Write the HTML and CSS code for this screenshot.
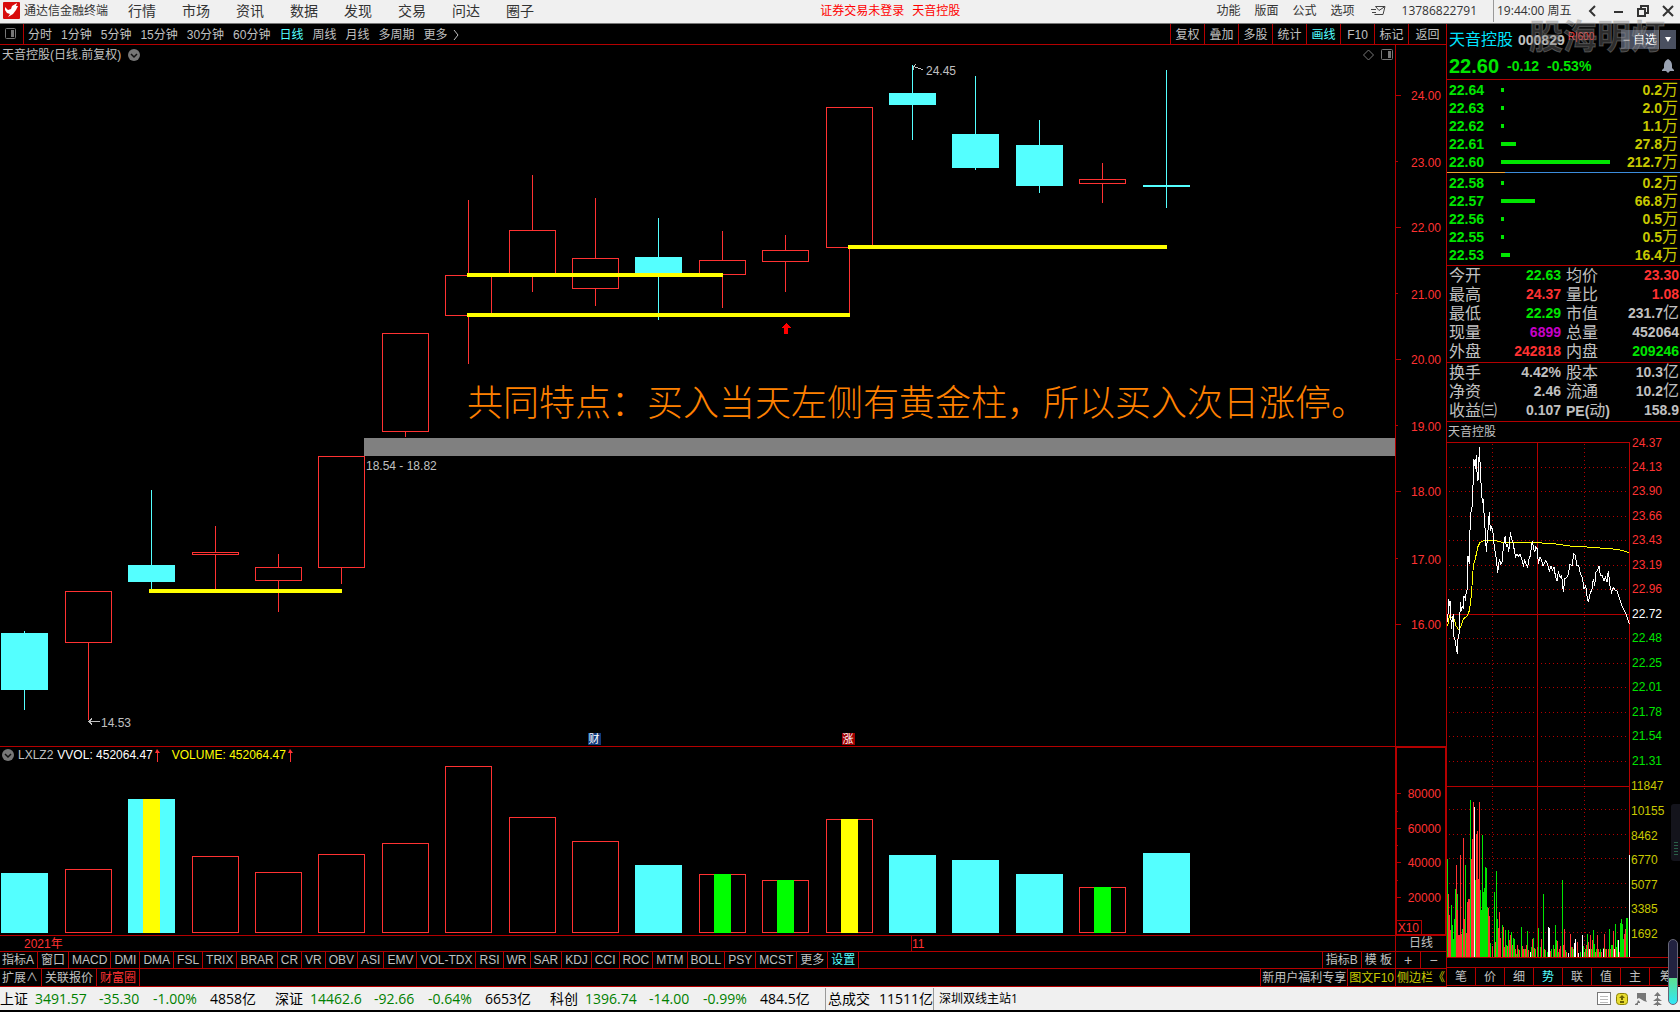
FILE: index.html
```html
<!DOCTYPE html>
<html lang="zh-CN">
<head>
<meta charset="utf-8">
<title>通达信金融终端</title>
<link rel="stylesheet" href="styles.css">
</head>
<body>
<header class="titlebar">
  <svg class="logo" viewBox="0 0 17 17" aria-hidden="true"><rect width="17" height="17" rx="1" fill="#d80c0c"/><path d="M2 5L5 8L8 7L9 4L14 1L13 4L15 4L13 8L10 12L5 15L7 12L4 11L2 8Z" fill="#fff"/></svg>
  <h1 class="app-name">通达信金融终端</h1>
  <nav class="menu">
    <button>行情</button><button>市场</button><button>资讯</button><button>数据</button><button>发现</button><button>交易</button><button>问达</button><button>圈子</button>
  </nav>
  <p class="login-state"><span>证券交易未登录</span><span>天音控股</span></p>
  <nav class="tools">
    <button>功能</button><button>版面</button><button>公式</button><button>选项</button>
  </nav>
  <svg class="mail" viewBox="0 0 15 11" aria-hidden="true"><path d="M4.500 1.500H14L12 9.500H3.500M4.500 1.500L8 5.500L14 1.500M0 4.500H5M1 7.500H5" fill="none" stroke="#444"/></svg>
  <span class="phone">13786822791</span>
  <time class="clock">19:44:00 周五</time>
  <div class="window-buttons">
    <button aria-label="收起"><svg viewBox="0 0 12 12"><path d="M8 1L3 6L8 11" /></svg></button>
    <button aria-label="最小化"><svg viewBox="0 0 12 12"><path d="M2 7H11"/></svg></button>
    <button aria-label="还原"><svg viewBox="0 0 12 12"><path d="M4 4V1H11V8H8M1 4H8V11H1Z"/></svg></button>
    <button aria-label="关闭"><svg viewBox="0 0 12 12"><path d="M1 1L11 11M11 1L1 11"/></svg></button>
  </div>
</header>

<main class="workspace">
  <section class="chart-area">
    <div class="toolbar">
      <button class="pane-toggle" aria-label="侧栏"><svg viewBox="0 0 13 12"><rect x="1.500" y=".5" width="10" height="10" rx="1" fill="none" stroke="#777"/><rect x="7" y="2" width="3" height="7" fill="#777"/></svg></button>
      <div class="periods">
        <button>分时</button><button>1分钟</button><button>5分钟</button><button>15分钟</button><button>30分钟</button><button>60分钟</button><button class="on">日线</button><button>周线</button><button>月线</button><button>多周期</button><button>更多<svg class="chev" viewBox="0 0 6 10"><path d="M1 0L5 5L1 10" fill="none" stroke="#c0c0c0"/></svg></button>
      </div>
      <div class="actions">
        <button>复权</button><button>叠加</button><button>多股</button><button>统计</button><button class="on">画线</button><button>F10</button><button>标记</button><button>返回</button>
      </div>
    </div>

    <div class="pane">
      <div class="plot">
        <div class="plot-title">
          <h2>天音控股(日线.前复权)</h2>
          <svg class="round" viewBox="0 0 12 12"><circle cx="6" cy="6" r="6" fill="#777"/><path d="M3 5L6 8L9 5" fill="none" stroke="#111" stroke-width="1.500"/></svg>
          <svg class="corner" viewBox="0 0 30 12"><path d="M5.500 1L10.500 6L5.500 11L.5 6Z" fill="none" stroke="#777"/><rect x="18.500" y=".5" width="11" height="10" rx="1" fill="none" stroke="#777"/><rect x="25" y="2" width="3" height="7" fill="#777"/></svg>
        </div>
        <svg class="graph" viewBox="0 63 1395 683" role="img" aria-label="日线K线图">
          <rect x="364" y="438" width="1031" height="18" fill="#808080"/>
          <g class="up">
            <path d="M88.500 643V720M215.500 526V552M215.500 555V589M278.500 554V567M278.500 581V612M341.500 568V584M405.500 432V437M468.500 200V275M468.500 316V364M532.500 175V230M532.500 276V292M595.500 198V258M595.500 289V306M722.500 231V260M722.500 275V308M785.500 235V250M785.500 262V292M849.500 248V316M1102.500 163V179M1102.500 184V203"/>
            <rect x="65.500" y="591.500" width="46" height="51"/>
            <rect x="192.500" y="552.500" width="46" height="2"/>
            <rect x="255.500" y="567.500" width="46" height="13"/>
            <rect x="318.500" y="456.500" width="46" height="111"/>
            <rect x="382.500" y="333.500" width="46" height="98"/>
            <rect x="445.500" y="275.500" width="46" height="40"/>
            <rect x="509.500" y="230.500" width="46" height="45"/>
            <rect x="572.500" y="258.500" width="46" height="30"/>
            <rect x="699.500" y="260.500" width="46" height="14"/>
            <rect x="762.500" y="250.500" width="46" height="11"/>
            <rect x="826.500" y="107.500" width="46" height="140"/>
            <rect x="1079.500" y="179.500" width="46" height="4"/>
          </g>
          <g class="down">
            <path d="M1 633h47v57h-47zM24 631h1v79h-1zM128 565h47v17h-47zM151 490h1v99h-1zM635 257h47v18h-47zM658 218h1v102h-1zM889 93h47v12h-47zM912 65h1v75h-1zM952 134h47v34h-47zM975 76h1v94h-1zM1016 145h47v41h-47zM1039 120h1v73h-1zM1143 185h47v2h-47zM1166 70h1v138h-1z"/>
          </g>
          <path class="support" d="M467 275H723M467 315H850M848 247H1167M149 591H342"/>
          <path d="M786 323L791 328H788V334H784V328H781Z" fill="#f00"/>
          <path d="M100 721.500H89M92 718.500L89 721.500L92 724.500M913 66.500L923 69.500M913 70V66.500L916 64.500" fill="none" stroke="#c0c0c0"/>
          <text x="101" y="727" class="note">14.53</text>
          <text x="926" y="75" class="note">24.45</text>
          <text x="366" y="470" class="note">18.54 - 18.82</text>
          <text x="467" y="416" class="remark">共同特点：买入当天左侧有黄金柱，所以买入次日涨停。</text>
          <rect x="588" y="733" width="13" height="12" fill="#123a7a"/><text x="594" y="743" class="flag">财</text>
          <rect x="842" y="733" width="13" height="12" fill="#a00000"/><text x="848" y="743" class="flag">涨</text>
        </svg>
      </div>
      <svg class="axis" viewBox="1396 45 50 701" aria-hidden="true">
        <path d="M1396 95.500h5M1396 161.500h2M1396 227.500h5M1396 293.500h2M1396 359.500h5M1396 425.500h2M1396 491.500h5M1396 558.500h2M1396 624.500h5"/>
        <text x="1441" y="100">24.00</text><text x="1441" y="167">23.00</text><text x="1441" y="232">22.00</text><text x="1441" y="299">21.00</text><text x="1441" y="364">20.00</text><text x="1441" y="431">19.00</text><text x="1441" y="496">18.00</text><text x="1441" y="564">17.00</text><text x="1441" y="629">16.00</text>
      </svg>
    </div>

    <div class="pane">
      <div class="plot">
        <div class="vol-title">
          <svg class="round" viewBox="0 0 12 12"><circle cx="6" cy="6" r="6" fill="#777"/><path d="M3 5L6 8L9 5" fill="none" stroke="#111" stroke-width="1.500"/></svg>
          <span>LXLZ2</span>
          <span class="white">VVOL: 452064.47<svg class="tick-up" viewBox="0 0 5 13"><path d="M2 0L5 4H3V13H2V4H0Z" fill="#ff3232"/></svg></span>
          <span class="yellow">VOLUME: 452064.47<svg class="tick-up" viewBox="0 0 5 13"><path d="M2 0L5 4H3V13H2V4H0Z" fill="#ff3232"/></svg></span>
        </div>
        <svg class="graph" viewBox="0 763 1395 172" role="img" aria-label="成交量图">
          <g class="down"><path d="M1 873h47v60h-47zM128 799h47v134h-47zM635 865h47v68h-47zM889 855h47v78h-47zM952 860h47v73h-47zM1016 874h47v59h-47zM1143 853h47v80h-47z"/></g>
          <g class="up"><path d="M65.500 932.500V869.500H111.500V932.500ZM192.500 932.500V856.500H238.500V932.500ZM255.500 932.500V872.500H301.500V932.500ZM318.500 932.500V854.500H364.500V932.500ZM382.500 932.500V843.500H428.500V932.500ZM445.500 932.500V766.500H491.500V932.500ZM509.500 932.500V817.500H555.500V932.500ZM572.500 932.500V841.500H618.500V932.500ZM699.500 932.500V874.500H745.500V932.500ZM762.500 932.500V880.500H808.500V932.500ZM826.500 932.500V819.500H872.500V932.500ZM1079.500 932.500V887.500H1125.500V932.500Z"/></g>
          <path fill="#ff0" d="M143 799h17v134h-17zM841 819h17v114h-17z"/>
          <path fill="#0f0" d="M714 874h17v59h-17zM777 880h17v53h-17zM1094 887h17v46h-17z"/>
        </svg>
      </div>
      <svg class="axis boxed" viewBox="1396 747 50 188" aria-hidden="true">
        <path d="M1396 793.500h5M1396 811.500h2M1396 828.500h5M1396 845.500h2M1396 862.500h5M1396 880.500h2M1396 897.500h5M1396 920.500h25.500v14M1396.500 747V934.500H1445.500V747.500H1396"/>
        <text x="1441" y="798">80000</text><text x="1441" y="833">60000</text><text x="1441" y="867">40000</text><text x="1441" y="902">20000</text><text x="1419" y="932">X10</text>
      </svg>
    </div>

    <div class="dates">
      <div class="date-track"><span>2021年</span><span>11</span></div>
      <button class="period-cell">日线</button>
    </div>

    <div class="tabs">
      <button>指标A</button><button>窗口</button><button>MACD</button><button>DMI</button><button>DMA</button><button>FSL</button><button>TRIX</button><button>BRAR</button><button>CR</button><button>VR</button><button>OBV</button><button>ASI</button><button>EMV</button><button>VOL-TDX</button><button>RSI</button><button>WR</button><button>SAR</button><button>KDJ</button><button>CCI</button><button>ROC</button><button>MTM</button><button>BOLL</button><button>PSY</button><button>MCST</button><button>更多</button><button class="on">设置</button>
      <div class="tabs-end"><button>指标B</button><button>模 板</button></div>
      <div class="zoomers"><button>+</button><button>−</button></div>
    </div>
    <div class="tabs extra">
      <button>扩展∧</button><button>关联报价</button><button class="hot">财富圈</button>
      <div class="tabs-end"><button>新用户福利专享</button><button class="gold">图文F10</button></div>
      <button class="side-toggle gold">侧边栏《</button>
    </div>
  </section>

  <aside class="quote">
    <div class="quote-head">
      <div class="name-row"><h2>天音控股</h2><strong>000829</strong><sup>R|600</sup>
        <div class="fav"><button>− 自选</button><button aria-label="更多自选"><svg viewBox="0 0 6 5"><path d="M0 0H6L3 5Z" fill="#fff"/></svg></button></div>
      </div>
      <div class="price-row"><b class="last">22.60</b><b>-0.12</b><b>-0.53%</b>
        <svg class="bell" viewBox="0 0 12 14"><path d="M6 0C8 1 10 3 10 6V9L12 11V12H0V11L2 9V6C2 3 4 1 6 0ZM4 12H8L6 14Z" fill="#9aa2b2"/></svg>
      </div>
    </div>
    <table class="book">
      <tr><td>22.64</td><td><i style="width:3px"></i></td><td><b>0.2</b>万</td></tr>
      <tr><td>22.63</td><td><i style="width:3px"></i></td><td><b>2.0</b>万</td></tr>
      <tr><td>22.62</td><td><i style="width:3px"></i></td><td><b>1.1</b>万</td></tr>
      <tr><td>22.61</td><td><i style="width:15px"></i></td><td><b>27.8</b>万</td></tr>
      <tr><td>22.60</td><td><i style="width:109px"></i></td><td><b>212.7</b>万</td></tr>
    </table>
    <div class="split"></div>
    <table class="book">
      <tr><td>22.58</td><td><i style="width:3px"></i></td><td><b>0.2</b>万</td></tr>
      <tr><td>22.57</td><td><i style="width:34px"></i></td><td><b>66.8</b>万</td></tr>
      <tr><td>22.56</td><td><i style="width:3px"></i></td><td><b>0.5</b>万</td></tr>
      <tr><td>22.55</td><td><i style="width:3px"></i></td><td><b>0.5</b>万</td></tr>
      <tr><td>22.53</td><td><i style="width:9px"></i></td><td><b>16.4</b>万</td></tr>
    </table>
    <table class="facts">
      <tr><th>今开</th><td class="green">22.63</td><th>均价</th><td class="red">23.30</td></tr>
      <tr><th>最高</th><td class="red">24.37</td><th>量比</th><td class="red">1.08</td></tr>
      <tr><th>最低</th><td class="green">22.29</td><th>市值</th><td>231.7<span>亿</span></td></tr>
      <tr><th>现量</th><td class="purple">6899</td><th>总量</th><td>452064</td></tr>
      <tr><th>外盘</th><td class="red">242818</td><th>内盘</th><td class="green">209246</td></tr>
    </table>
    <table class="facts basics">
      <tr><th>换手</th><td>4.42%</td><th>股本</th><td>10.3<span>亿</span></td></tr>
      <tr><th>净资</th><td>2.46</td><th>流通</th><td>10.2<span>亿</span></td></tr>
      <tr><th>收益㈢</th><td>0.107</td><th><b>PE(</b>动<b>)</b></th><td>158.9</td></tr>
    </table>
    <h3 class="mini-title">天音控股</h3>
    <svg class="intraday" viewBox="1447 443 233 525" role="img" aria-label="分时走势">
      <path class="grid-dots" d="M1449 468.500H1629M1449 492.500H1629M1449 517.500H1629M1449 541.500H1629M1449 566.500H1629M1449 590.500H1629M1449 639.500H1629M1449 664.500H1629M1449 688.500H1629M1449 713.500H1629M1449 737.500H1629M1449 762.500H1629M1449 810.500H1629M1449 835.500H1629M1449 859.500H1629M1449 884.500H1629M1449 908.500H1629M1449 933.500H1629M1492.500 445V958M1584.500 445V958"/>
      <path class="grid-line" d="M1447 443.500H1629.500V958M1447 615.500H1629M1447 787.500H1629M1447 958.500H1680M1537.500 443V958"/>
      <svg x="1447" y="443" width="183" height="172" viewBox="201 69 549 516" overflow="visible">
        <path fill="none" stroke="#ff0" stroke-width="3" d="M203 620L208 590 215 595 222 600 228 620 236 632 242 625 250 600 262 590 268 575 272 550 276 500 280 440 286 420 293 385 300 370 311 365 345 365 368 370 470 371 520 374 570 381 620 384 700 390 725 394 748 401"/>
        <path fill="none" stroke="#fff" stroke-width="3" d="M203 610L206 540 209 560 211 545 214 630 217 600 220 585 222 655 226 665 229 690 232 705 234 660 238 640 241 550 244 575 247 560 250 570 252 530 256 540 259 520 262 510 264 410 268 435 271 285 275 275 278 240 281 120 284 130 286 150 289 108 292 185 295 180 298 85 301 150 304 210 307 250 310 245 313 300 316 340 319 400 322 360 325 320 328 280 331 335 335 325 338 330 340 355 343 385 347 405 350 430 353 462 358 420 362 435 366 430 370 385 373 365 376 350 379 385 383 375 386 400 389 370 391 340 395 360 398 370 400 375 403 395 407 412 411 405 416 412 420 405 425 420 430 440 434 425 440 440 443 445 447 420 451 410 454 385 457 365 460 385 464 400 467 385 472 390 475 435 480 415 485 425 489 440 494 430 498 425 503 438 508 455 513 440 517 455 522 445 527 475 531 485 535 460 541 475 545 470 550 520 554 480 560 475 565 465 570 435 576 440 581 405 586 408 590 440 596 440 601 465 607 475 612 510 617 500 621 530 625 550 630 525 636 510 640 480 644 500 648 460 652 455 657 440 661 470 667 470 672 485 676 475 681 490 685 455 690 500 695 520 700 505 706 515 711 515 716 530 722 550 730 570 740 590 748 615"/>
      </svg>
      <svg x="1447" y="787" width="183" height="171" viewBox="201 142 549 513">
        <g fill="none" stroke-width="3">
          <path stroke="#00e600" d="M202.500 655V362M214.500 655V500M217.500 655V560M220.500 655V600M223.500 655V540M226.500 655V450M232.500 655V465M247.500 655V572M256.500 655V380M271.500 655V183M286.500 655V423M301.500 655V455M304.500 655V515M307.500 655V288M310.500 655V460M313.500 655V447M316.500 655V385M319.500 655V388M322.500 655V505M331.500 655V612M343.500 655V460M349.500 655V398M352.500 655V540M367.500 655V560M376.500 655V575M379.500 655V620M385.500 655V575M394.500 655V580M400.500 655V598M403.500 655V600M409.500 655V645M415.500 655V632M424.500 655V564M433.500 655V630M442.500 655V576M454.500 655V625M460.500 655V597M466.500 655V630M475.500 655V567M481.500 655V625M490.500 655V465M496.500 655V635M502.500 655V640M514.500 655V630M520.500 655V620M526.500 655V558M529.500 655V605M535.500 655V640M547.500 655V425M556.500 655V635M574.500 655V625M580.500 655V630M595.500 655V642M601.500 655V640M610.500 655V622M616.500 655V630M622.500 655V587M634.500 655V630M640.500 655V574M643.500 655V615M649.500 655V630M658.500 655V640M661.500 655V632M670.500 655V628M676.500 655V632M688.500 655V570M694.500 655V620M697.500 655V620M706.500 655V555M709.500 655V625M712.500 655V605M721.500 655V552M724.500 655V540M727.500 655V555M730.500 655V600M733.500 655V603M736.500 655V600M739.500 655V537M742.500 655V537"/>
          <path stroke="#ff3232" d="M205.500 655V465M208.500 655V528M211.500 655V573M229.500 655V378M232.500 655V515M235.500 655V590M238.500 655V588M241.500 655V348M244.500 655V586M250.500 655V297M253.500 655V540M259.500 655V582M262.500 655V490M265.500 655V480M268.500 655V480M274.500 655V360M277.500 655V300M280.500 655V190M289.500 655V285M292.500 655V278M295.500 655V420M298.500 655V190M325.500 655V508M328.500 655V533M337.500 655V623M346.500 655V610M355.500 655V567M358.500 655V520M361.500 655V598M370.500 655V564M373.500 655V625M382.500 655V622M388.500 655V605M391.500 655V590M397.500 655V620M406.500 655V632M412.500 655V620M418.500 655V635M427.500 655V622M430.500 655V630M436.500 655V630M439.500 655V620M445.500 655V635M457.500 655V600M463.500 655V628M472.500 655V625M484.500 655V600M493.500 655V630M511.500 655V637M523.500 655V630M532.500 655V608M538.500 655V630M541.500 655V622M550.500 655V620M553.500 655V570M559.500 655V640M571.500 655V585M577.500 655V625M592.500 655V610M613.500 655V640M619.500 655V620M625.500 655V610M631.500 655V590M637.500 655V605M646.500 655V640M652.500 655V588M655.500 655V632M664.500 655V640M673.500 655V587M679.500 655V632M685.500 655V632M691.500 655V630M700.500 655V577M706.500 655V630M718.500 655V640M733.500 655V585M736.500 655V570"/>
          <path stroke="#fff" d="M283.500 655V205M451.500 655V640M505.500 655V564M508.500 655V568M565.500 655V642M583.500 655V612M586.500 655V600M595.500 655V642M607.500 655V590M628.500 655V630M670.500 655V632M703.500 655V632M715.500 655V605M748.500 655V350"/>
        </g>
      </svg>
      <g class="lab red"><text x="1632" y="448">24.37</text><text x="1632" y="472">24.13</text><text x="1632" y="496">23.90</text><text x="1632" y="521">23.66</text><text x="1632" y="545">23.43</text><text x="1632" y="570">23.19</text><text x="1632" y="594">22.96</text></g>
      <g class="lab white"><text x="1632" y="619">22.72</text></g>
      <g class="lab green"><text x="1632" y="643">22.48</text><text x="1632" y="668">22.25</text><text x="1632" y="692">22.01</text><text x="1632" y="717">21.78</text><text x="1632" y="741">21.54</text><text x="1632" y="766">21.31</text></g>
      <g class="lab gold"><text x="1631" y="791">11847</text><text x="1631" y="816">10155</text><text x="1631" y="841">8462</text><text x="1631" y="865">6770</text><text x="1631" y="890">5077</text><text x="1631" y="914">3385</text><text x="1631" y="939">1692</text></g>
    </svg>
    <div class="quote-tabs"><button>笔</button><button>价</button><button>细</button><button class="on">势</button><button>联</button><button>值</button><button>主</button><button>筹</button></div>
  </aside>
</main>

<footer class="status">
  <div class="index"><span>上证</span><em>3491.57</em><em>-35.30</em><em>-1.00%</em><span>4858亿</span></div>
  <div class="index"><span>深证</span><em>14462.6</em><em>-92.66</em><em>-0.64%</em><span>6653亿</span></div>
  <div class="index"><span>科创</span><em>1396.74</em><em>-14.00</em><em>-0.99%</em><span>484.5亿</span></div>
  <div class="turnover"><span>总成交</span><span>11511亿</span></div>
  <span class="server">深圳双线主站1</span>
  <svg class="tray" viewBox="0 0 68 16" aria-hidden="true">
    <rect x=".5" y="1.500" width="13" height="12" fill="#fff" stroke="#777"/><path d="M3 5.500H11M3 8.500H11M3 11.500H11" stroke="#bbb"/>
    <rect x="19.500" y="2.500" width="11" height="11" rx="3" fill="#e8dc30" stroke="#8a8000"/><path d="M25 4L28 7H26V9H24V7H22ZM23 10H27V12H23Z" fill="#6a6200"/>
    <path d="M40 2H49V9L50 11L47 10L42 7L40 8ZM41 9L43 11V12H41V14H38V13L40 12Z" fill="#777"/>
    <path d="M60.500 1L64 5H61V7L65 10H61V11L65 14H61V15H60V14H56L60 11V10H56L60 7V5H57Z" fill="#777"/>
  </svg>
</footer>

<div class="watermark" aria-hidden="true">股海明灯</div>
<div class="side-meter" aria-hidden="true"></div>
<div class="level-pill" aria-hidden="true"></div>
</body>
</html>
```
FILE: styles.css
```css
:root {
  --line: #b40000;
  --red: #ff3232;
  --green: #00e600;
  --cyan: #54ffff;
  --gold: #c8c800;
  --grey: #c0c0c0;
}
* { box-sizing: border-box; margin: 0; padding: 0; }
body {
  position: relative;
  display: flex;
  flex-direction: column;
  min-height: 100vh;
  overflow-x: hidden;
  background: #000;
  color: var(--grey);
  font: 12px/16px "Liberation Sans", "Noto Sans CJK SC", sans-serif;
}
button {
  border: 0;
  background: none;
  color: inherit;
  font: inherit;
  white-space: nowrap;
}
svg { display: block; }
h1, h2, h3 { font-size: 12px; font-weight: 400; }
.on { color: var(--cyan); }
.red { color: var(--red); fill: var(--red); }
.green { color: var(--green); fill: var(--green); }
.white { color: #fff; fill: #fff; }
.yellow { color: #ff0; }
.gold { color: var(--gold); fill: var(--gold); }
.purple { color: #c800c8; }

/* title bar */
.titlebar {
  display: flex;
  align-items: center;
  height: 24px;
  padding: 0 6px 2px 3px;
  border-bottom: 1px solid #777;
  background: #f0f0f0;
  color: #333;
}
.logo { width: 17px; height: 17px; }
.app-name { margin-left: 4px; }
.menu { display: flex; gap: 26px; margin-left: 20px; font-size: 14px; }
.login-state { display: flex; gap: 8px; margin: 0 auto; padding-left: 30px; color: #f00; }
.tools { display: flex; gap: 14px; }
.mail { width: 15px; height: 11px; margin-left: 16px; }
.phone { margin-left: 16px; font-family: "Open Sans", sans-serif; }
.clock {
  width: 86px;
  margin-left: 16px;
  padding-left: 3px;
  border-left: 1px solid #999;
  font-family: "Open Sans", "Noto Sans CJK SC", sans-serif;
  line-height: 22px;
  white-space: nowrap;
}
.window-buttons { display: flex; gap: 13px; margin-left: 8px; }
.window-buttons svg { width: 12px; height: 12px; fill: none; stroke: #333; stroke-width: 2; }

/* workspace */
.workspace { display: flex; }
.chart-area { flex: 1; min-width: 0; }
.toolbar { display: flex; height: 21px; border-bottom: 1px solid var(--line); }
.pane-toggle { width: 24px; padding-left: 4px; border-right: 1px solid var(--line); }
.pane-toggle svg { width: 13px; height: 12px; }
.periods { display: flex; gap: 9px; padding: 1px 0 0 4px; }
.periods button { display: flex; align-items: center; gap: 5px; }
.chev { width: 6px; height: 10px; }
.actions { display: flex; margin-left: auto; }
.actions button { width: 34px; padding-top: 1px; border-left: 1px solid var(--line); }
.actions button:last-child { width: 38px; }

.pane { display: flex; border-bottom: 1px solid var(--line); }
.plot { flex: 1; min-width: 0; }
.plot-title { display: flex; align-items: center; gap: 7px; height: 18px; padding: 1px 2px 0; }
.round { width: 12px; height: 12px; }
.corner { width: 30px; height: 12px; margin-left: auto; }
.vol-title { display: flex; align-items: center; gap: 4px; height: 16px; padding-left: 2px; }
.vol-title span { display: flex; align-items: center; gap: 2px; }
.vol-title .yellow { margin-left: 8px; }
.tick-up { width: 5px; height: 13px; }
.graph { width: 100%; height: auto; }
.up { fill: none; stroke: var(--red); }
.down { fill: var(--cyan); }
.graph, .axis { shape-rendering: crispEdges; }
.support { fill: none; stroke: #ff0; stroke-width: 4; }
.note { fill: var(--grey); font-size: 12px; }
.remark { fill: #ff8000; font-size: 36px; font-weight: 300; }
.flag { fill: #fff; font-size: 11px; text-anchor: middle; }
.axis { width: 51px; border-left: 1px solid var(--line); }
.axis path { fill: none; stroke: var(--line); }
.axis text { fill: var(--red); font-size: 12px; text-anchor: end; }

.dates { display: flex; height: 16px; border-bottom: 1px solid var(--line); }
.date-track { flex: 1; display: grid; grid-template-columns: 911fr 484fr; color: var(--red); line-height: 16px; }
.date-track span { height: 15px; }
.date-track span:first-child { padding-left: 24px; }
.date-track span + span { border-left: 1px solid var(--line); }
.period-cell { width: 51px; border-left: 1px solid var(--line); line-height: 15px; }

.tabs { display: flex; height: 17px; border-bottom: 1px solid var(--line); }
.tabs button { padding: 0 3px; border-right: 1px solid var(--line); }
.tabs > button:first-child { padding-left: 2px; }
.tabs-end { display: flex; margin-left: auto; border-left: 1px solid var(--line); }
.tabs-end button:last-child { border-right: 0; }
.zoomers { display: grid; grid-template-columns: 1fr 1fr; width: 51px; border-left: 1px solid var(--line); font-size: 14px; }
.zoomers button:last-child { border-right: 0; }
.extra { height: 18px; }
.extra .tabs-end button { padding: 0 1px; }
.hot { color: var(--red); }
.tabs .side-toggle { width: 51px; padding: 0 1px; border-left: 1px solid var(--line); border-right: 0; text-align: left; }

/* quote panel */
.quote { display: flex; flex-direction: column; width: 234px; border-left: 1px solid var(--line); overflow: hidden; }
.quote-head { height: 56px; padding: 3px 4px 0 2px; border-bottom: 1px solid var(--line); }
.name-row { display: flex; align-items: center; height: 25px; }
.name-row h2 { color: #00e4ff; font-size: 16px; }
.name-row strong { margin-left: 5px; font-size: 14px; }
.name-row sup { margin-left: 3px; color: var(--red); font-size: 10px; line-height: 20px; align-self: flex-start; }
.fav { display: flex; gap: 1px; margin-left: auto; }
.fav button { height: 19px; padding: 0 2px; background: #4a5060; color: #fff; font-size: 12px; }
.fav button + button { width: 16px; padding: 0 5px; }
.fav svg { width: 6px; height: 5px; }
.price-row { display: flex; align-items: center; gap: 8px; height: 28px; color: var(--green); font-size: 14px; }
.last { font-size: 20px; }
.bell { width: 12px; height: 14px; margin-left: auto; margin-right: 2px; }
table { width: 100%; border-collapse: separate; border-spacing: 0; table-layout: fixed; }
.book { margin: 1px 0; color: var(--green); font-size: 14px; line-height: 18px; font-weight: 700; }
.book td { height: 18px; }
.book td:first-child { width: 54px; padding-left: 2px; }
.book td:last-child { width: 56px; padding-right: 2px; color: var(--gold); font-size: 16px; font-weight: 400; text-align: right; white-space: nowrap; }
.book b { font-size: 14px; line-height: 0; }
.book i { display: block; height: 4px; background: var(--green); }
.split { height: 1px; background: linear-gradient(90deg, #f0a030 25%, #3c8cdc 25%); }
.facts { border-top: 1px solid var(--line); font-size: 14px; line-height: 19px; font-weight: 700; }
.facts tr { height: 19px; }
.facts th { width: 52px; padding-left: 2px; font-size: 16px; font-weight: 400; text-align: left; white-space: nowrap; vertical-align: top; }
.facts th:nth-child(3) { width: 50px; padding-left: 5px; }
.facts th b { font-size: 14px; line-height: 0; }
.facts td { padding-right: 1px; text-align: right; white-space: nowrap; vertical-align: top; }
.facts td:nth-child(2) { width: 62px; padding-right: 0; }
.facts td span { font-size: 16px; font-weight: 400; line-height: 0; }
.basics { margin-top: 1px; }
.mini-title { margin-top: 1px; height: 21px; padding-left: 1px; border-top: 1px solid var(--line); line-height: 20px; }
.intraday { width: 100%; height: auto; overflow: visible; shape-rendering: crispEdges; }
.grid-dots { fill: none; stroke: var(--line); stroke-dasharray: 1 3; }
.grid-line { fill: none; stroke: var(--line); }
.lab { font-size: 12px; }
.quote-tabs { display: flex; height: 19px; border-top: 1px solid var(--line); border-bottom: 1px solid var(--line); }
.quote-tabs button { flex: 0 0 29px; border-right: 1px solid var(--line); }
.quote-tabs button:last-child { flex: 0 0 32px; border-right: 0; }

/* status bar */
.status {
  display: flex;
  align-items: center;
  height: 23px;
  background: #f0f0f0;
  color: #000;
  font: 14px/22px "Open Sans", "Noto Sans CJK SC", sans-serif;
  white-space: nowrap;
}
.index { display: grid; grid-template-columns: 35px 64px 54px 57px 65px; }
.status em { color: #008000; font-style: normal; }
.turnover { display: flex; gap: 9px; width: 109px; padding-left: 2px; border: solid #999; border-width: 0 1px; }
.server { padding-left: 5px; font-size: 12px; }
.tray { width: 68px; height: 16px; margin-left: auto; margin-right: 15px; }

/* overlays floating above the terminal */
.watermark {
  position: absolute;
  top: 14px;
  right: 15px;
  color: rgba(120, 120, 120, .4);
  font-size: 34px;
  font-weight: 700;
  line-height: 46px;
  -webkit-text-stroke: 1px rgba(170, 170, 170, .35);
  pointer-events: none;
}
.side-meter {
  position: absolute;
  top: 804px;
  right: 0;
  width: 9px;
  height: 57px;
  border-radius: 3px 0 0 3px;
  background: repeating-linear-gradient(#2a6048 0 1px, transparent 1px 3px) 3px 38px / 4px 14px no-repeat, #14141c;
}
.level-pill {
  position: absolute;
  top: 939px;
  right: 2px;
  width: 10px;
  height: 66px;
  border: 1px solid #667;
  border-radius: 5px;
  background: linear-gradient(#222240 60%, #5fe090 60%, #30e8f8);
}
```
